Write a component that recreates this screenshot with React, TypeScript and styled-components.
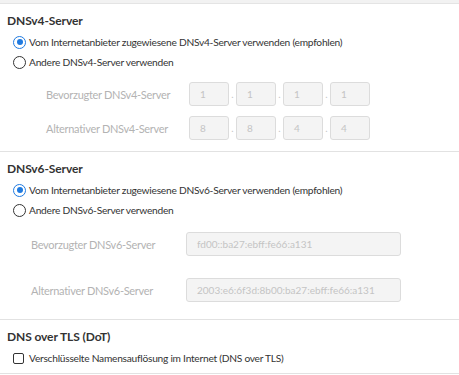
import { Fragment } from "react";
import styled, { createGlobalStyle } from "styled-components";

const GlobalStyle = createGlobalStyle`
  body {
    margin: 0;
    background: #fff;
    font-family: Lato, "Noto Sans", sans-serif;
    color: #333;
  }
`;

const Page = styled.div`
  width: 459px;
`;

const TopBar = styled.div`
  height: 3px;
  background: #f2f2f2;
  border-bottom: 1px solid #e4e4e4;
`;

const Section = styled.section<{ $bottom: number }>`
  padding: 9px 0 ${(p) => p.$bottom}px 7px;
  border-bottom: 1px solid #e2e2e2;
`;

const Heading = styled.h3`
  margin: 0;
  font-size: 12px;
  line-height: 16px;
  font-weight: 700;
  letter-spacing: -0.1px;
  color: #333;
`;

const Options = styled.div`
  margin-top: 3px;
  padding-left: 6px;
`;

const Option = styled.label`
  display: flex;
  align-items: center;
  gap: 3px;
  height: 20px;
  font-size: 10.2px;
  letter-spacing: -0.25px;
  color: #333;
  white-space: nowrap;
`;

const Radio = styled.span<{ $on?: boolean }>`
  width: 13px;
  height: 13px;
  box-sizing: border-box;
  border-radius: 50%;
  border: 1.5px solid ${(p) => (p.$on ? "#1f7ae0" : "#333")};
  display: flex;
  align-items: center;
  justify-content: center;
  &::after {
    content: "";
    width: 6px;
    height: 6px;
    border-radius: 50%;
    background: ${(p) => (p.$on ? "#1f7ae0" : "transparent")};
  }
`;

const Check = styled.span`
  width: 11px;
  height: 11px;
  margin-right: 2px;
  box-sizing: border-box;
  border: 1.5px solid #333;
  border-radius: 2px;
`;

const Fields = styled.div<{ $top: number; $gap: number }>`
  margin-top: ${(p) => p.$top}px;
  display: flex;
  flex-direction: column;
  gap: ${(p) => p.$gap}px;
`;

const FieldRow = styled.div<{ $indent: number; $label: number }>`
  display: grid;
  grid-template-columns: ${(p) => p.$label}px auto;
  align-items: center;
  padding-left: ${(p) => p.$indent}px;
`;

const FieldLabel = styled.span`
  font-size: 11px;
  letter-spacing: -0.3px;
  color: #b3b3b3;
  white-space: nowrap;
`;

const Octets = styled.div`
  display: flex;
  align-items: center;
`;

const Dot = styled.span`
  width: 7px;
  text-align: center;
  font-size: 10px;
  color: #c4c4c4;
`;

const Box = styled.div<{ $w: number }>`
  width: ${(p) => p.$w}px;
  height: 24px;
  box-sizing: border-box;
  border: 1px solid #dcdcdc;
  border-radius: 3px;
  background: #f4f4f4;
  padding-left: 10px;
  display: flex;
  align-items: center;
  font-size: 10px;
  color: #c4c4c4;
  white-space: nowrap;
`;

const v4Rows = [
  { label: "Bevorzugter DNSv4-Server", octets: ["1", "1", "1", "1"] },
  { label: "Alternativer DNSv4-Server", octets: ["8", "8", "4", "4"] },
];

const v6Rows = [
  { label: "Bevorzugter DNSv6-Server", value: "fd00::ba27:ebff:fe66:a131" },
  { label: "Alternativer DNSv6-Server", value: "2003:e6:6f3d:8b00:ba27:ebff:fe66:a131" },
];

export default function App() {
  return (
    <Page>
      <GlobalStyle />
      <TopBar />

      <Section $bottom={11}>
        <Heading>DNSv4-Server</Heading>
        <Options>
          <Option>
            <Radio $on />
            Vom Internetanbieter zugewiesene DNSv4-Server verwenden (empfohlen)
          </Option>
          <Option>
            <Radio />
            Andere DNSv4-Server verwenden
          </Option>
        </Options>
        <Fields $top={10} $gap={10}>
          {v4Rows.map((row) => (
            <FieldRow key={row.label} $indent={39} $label={143}>
              <FieldLabel>{row.label}</FieldLabel>
              <Octets>
                {row.octets.map((o, i) => (
                  <Fragment key={i}>
                    {i > 0 && <Dot>.</Dot>}
                    <Box $w={40}>{o}</Box>
                  </Fragment>
                ))}
              </Octets>
            </FieldRow>
          ))}
        </Fields>
      </Section>

      <Section $bottom={17}>
        <Heading>DNSv6-Server</Heading>
        <Options>
          <Option>
            <Radio $on />
            Vom Internetanbieter zugewiesene DNSv6-Server verwenden (empfohlen)
          </Option>
          <Option>
            <Radio />
            Andere DNSv6-Server verwenden
          </Option>
        </Options>
        <Fields $top={12} $gap={22}>
          {v6Rows.map((row) => (
            <FieldRow key={row.label} $indent={24} $label={155}>
              <FieldLabel>{row.label}</FieldLabel>
              <Box $w={215}>{row.value}</Box>
            </FieldRow>
          ))}
        </Fields>
      </Section>

      <Section $bottom={5}>
        <Heading>DNS over TLS (DoT)</Heading>
        <Options>
          <Option>
            <Check />
            Verschlüsselte Namensauflösung im Internet (DNS over TLS)
          </Option>
        </Options>
      </Section>
    </Page>
  );
}
